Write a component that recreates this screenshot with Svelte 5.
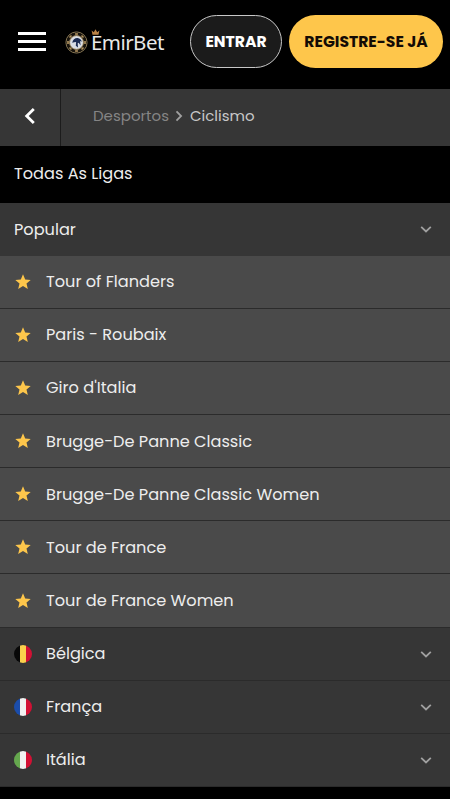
<script lang="ts">
    type Country = { name: string; colors: [string, string, string] };

    const leagues = [
        'Tour of Flanders',
        'Paris - Roubaix',
        "Giro d'Italia",
        'Brugge-De Panne Classic',
        'Brugge-De Panne Classic Women',
        'Tour de France',
        'Tour de France Women',
    ];

    const countries: Country[] = [
        { name: 'Bélgica', colors: ['#080808', '#fbd04c', '#d21034'] },
        { name: 'França', colors: ['#1b4dab', '#f1f1f1', '#d21034'] },
        { name: 'Itália', colors: ['#65a74e', '#f1f1f1', '#d21034'] },
    ];

    const chipSpots = [0, 45, 90, 135, 180, 225, 270, 315];

    let popularOpen = $state(true);
</script>

{#snippet chevron()}
    <svg class="chevron" width="12" height="8" viewBox="0 0 12 8" aria-hidden="true">
        <path d="M1.2 1.8 6 6.4l4.8-4.6" fill="none" stroke="#a0a0a0" stroke-width="1.8" />
    </svg>
{/snippet}

<div class="page">
    <header class="topbar">
        <button class="menu-btn" aria-label="Menu">
            <span></span>
            <span></span>
            <span></span>
        </button>

        <a href="#home" class="logo">
            <svg width="23" height="23" viewBox="0 0 23 23" aria-hidden="true">
                <circle cx="11.5" cy="11.5" r="10.6" fill="#17130d" stroke="#857452" stroke-width="1" />
                {#each chipSpots as angle}
                    <path d="M10.1 2.2h2.8v1.6h-2.8z" fill="#b59661" transform="rotate({angle} 11.5 11.5)" />
                {/each}
                <circle cx="11.5" cy="11.5" r="6.9" fill="#d9dde4" stroke="#a38a5c" stroke-width="0.9" />
                <path d="M7.2 11.8c.6-3.3 3-5 5.5-4.7 2.1.2 3.6 1.8 4.1 3.7l-1.7-.7.5 4.3-1.9-2.6-1 .5.3 4.3-2.2-1.9.3-3.6-2 .2z" fill="#1c2c52" />
            </svg>
            <span class="logo-text">
                <svg class="crown" width="9" height="6" viewBox="0 0 9 6" aria-hidden="true">
                    <path d="M1.5 5.7.6 1.5l2.2 1.7L4.5.3l1.7 2.9 2.2-1.7-.9 4.2z" fill="#b98246" />
                </svg>
                EmirBet
            </span>
        </a>

        <div class="auth">
            <button class="login-btn">ENTRAR</button>
            <button class="register-btn">REGISTRE-SE JÁ</button>
        </div>
    </header>

    <nav class="crumbs">
        <button class="back-btn" aria-label="Voltar">
            <svg width="12" height="18" viewBox="0 0 12 18" aria-hidden="true">
                <path d="M9.8 2 2.7 9l7.1 7" fill="none" stroke="#fff" stroke-width="2.8" />
            </svg>
        </button>
        <div class="trail">
            <a href="#desportos">Desportos</a>
            <svg width="8" height="12" viewBox="0 0 8 12" aria-hidden="true">
                <path d="M1.5 1.4 6.1 6l-4.6 4.6" fill="none" stroke="#a0a0a0" stroke-width="1.8" />
            </svg>
            <span>Ciclismo</span>
        </div>
    </nav>

    <main>
        <h1 class="all-leagues">Todas As Ligas</h1>

        <button class="row head" onclick={() => (popularOpen = !popularOpen)}>
            <span>Popular</span>
            {@render chevron()}
        </button>

        {#if popularOpen}
            {#each leagues as league}
                <a href="#liga" class="row league">
                    <svg class="icon" width="18" height="18" viewBox="0 0 18 18" aria-hidden="true">
                        <path d="m9 1.3 2.2 5.2 5.5.4-4.2 3.6 1.3 5.6L9 13.1l-4.8 3 1.3-5.6-4.2-3.6 5.5-.4z" fill="#fdc64b" />
                    </svg>
                    <span>{league}</span>
                </a>
            {/each}
        {/if}

        {#each countries as country}
            <button class="row">
                <span class="icon flag">
                    {#each country.colors as color}
                        <i style="background: {color}"></i>
                    {/each}
                </span>
                <span>{country.name}</span>
                {@render chevron()}
            </button>
        {/each}
    </main>
</div>

<style>
    :global(body) {
        background: #000;
    }
    .page {
        min-height: 799px;
        box-sizing: border-box;
        background: #000;
        color: #ededed;
        font-family: Poppins, Inter, "Liberation Sans", sans-serif;
        font-size: 16.16px;
        overflow: hidden;
    }
    button {
        margin: 0;
        padding: 0;
        border: 0;
        background: none;
        color: inherit;
        font: inherit;
        cursor: pointer;
    }
    a {
        color: inherit;
        text-decoration: none;
    }
    svg {
        display: block;
        flex: none;
    }

    .topbar {
        display: flex;
        align-items: center;
        height: 89px;
        padding: 0 7px 6px 18px;
        box-sizing: border-box;
    }
    .menu-btn {
        display: flex;
        flex-direction: column;
        gap: 5px;
        width: 28px;
        margin-right: 19px;
    }
    .menu-btn span {
        height: 3px;
        background: #fff;
    }
    .logo {
        display: flex;
        align-items: center;
        gap: 3px;
        padding-top: 1px;
    }
    .logo-text {
        position: relative;
        color: #e8e8e8;
        font-family: "Noto Sans", "Open Sans", sans-serif;
        font-size: 20.5px;
        line-height: 24px;
        letter-spacing: -0.55px;
        white-space: nowrap;
    }
    .crown {
        position: absolute;
        left: 0;
        top: -1px;
    }
    .auth {
        display: flex;
        gap: 7px;
        margin-left: auto;
    }
    .login-btn,
    .register-btn {
        height: 53.5px;
        border-radius: 27px;
        font-size: 15.6px;
        font-weight: 700;
        white-space: nowrap;
    }
    .login-btn {
        width: 92px;
        border: 1px solid #c8c8c8;
        background: #1b1b1b;
        color: #fff;
    }
    .register-btn {
        width: 154px;
        background: #fec64b;
        color: #130b05;
    }

    .crumbs {
        display: flex;
        height: 57px;
        background: #363636;
    }
    .back-btn {
        display: flex;
        align-items: center;
        justify-content: center;
        width: 61px;
        box-sizing: border-box;
        border-right: 1px solid #1c1c1c;
        padding-bottom: 3px;
    }
    .trail {
        display: flex;
        align-items: center;
        gap: 6.5px;
        padding: 0 0 4px 32px;
        color: #c8c8c8;
        font-size: 15px;
    }
    .trail a {
        color: #858585;
    }

    .all-leagues {
        display: flex;
        align-items: center;
        height: 56.5px;
        margin: 0;
        padding: 0 14px 2px;
        box-sizing: border-box;
        font-size: inherit;
        font-weight: 400;
    }

    .row {
        display: flex;
        align-items: center;
        width: 100%;
        height: 53.15px;
        box-sizing: border-box;
        padding: 0 18px 0 14px;
        text-align: left;
        border-bottom: 1px solid #2b2b2b;
        background: #363636;
    }
    .row.head {
        border-bottom: 0;
    }
    .row.league {
        background: #4a4a4a;
    }
    .icon {
        width: 18px;
        height: 18px;
        margin-right: 14px;
    }
    .flag {
        display: flex;
        flex: none;
        border-radius: 50%;
        overflow: hidden;
    }
    .flag i {
        flex: 1;
    }
    .chevron {
        margin-left: auto;
    }
</style>
